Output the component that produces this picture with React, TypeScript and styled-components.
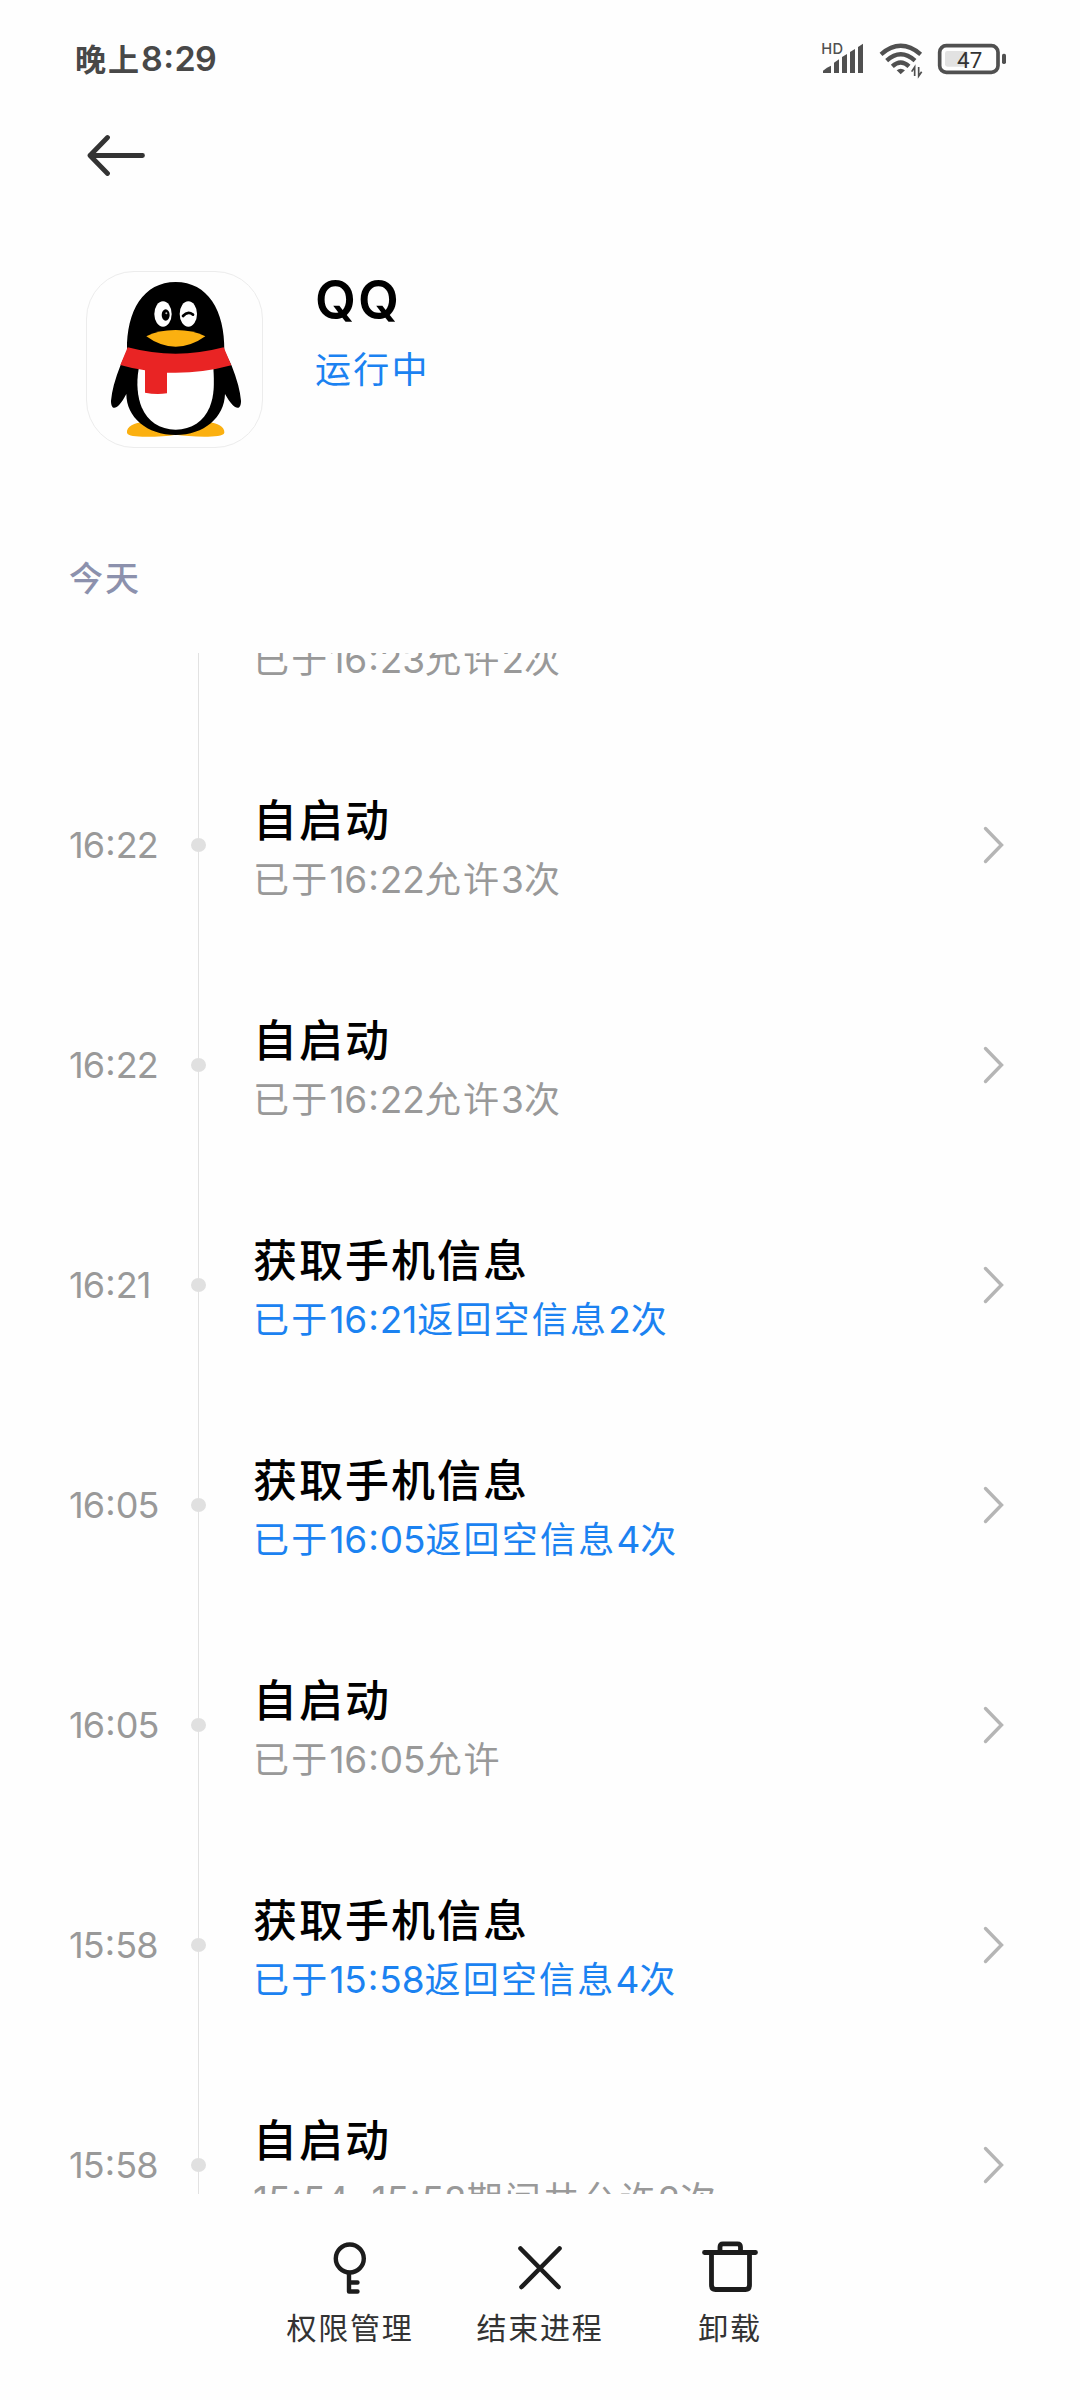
import styled, { createGlobalStyle } from 'styled-components';

interface Activity {
  time: string,
  title: string,
  detail: string,
  highlight?: boolean,
}

const activities: Activity[] = [
  { time: '16:23', title: '自启动', detail: '已于16:23允许2次' },
  { time: '16:22', title: '自启动', detail: '已于16:22允许3次' },
  { time: '16:22', title: '自启动', detail: '已于16:22允许3次' },
  { time: '16:21', title: '获取手机信息', detail: '已于16:21返回空信息2次', highlight: true },
  { time: '16:05', title: '获取手机信息', detail: '已于16:05返回空信息4次', highlight: true },
  { time: '16:05', title: '自启动', detail: '已于16:05允许' },
  { time: '15:58', title: '获取手机信息', detail: '已于15:58返回空信息4次', highlight: true },
  { time: '15:58', title: '自启动', detail: '15:54–15:58期间共允许2次' },
];

// digits are set in a different face than the Chinese text, colons sit a bit higher
function Mixed({ text }: { text: string }) {
  return (
    <>
      {text.split(/(\d+|:|–)/).filter(Boolean).map((part, i) => {
        if (part === ':') return <Colon key={i}>:</Colon>;
        if (part === '–') return <Dash key={i}>–</Dash>;
        return /\d/.test(part) ? <Digits key={i}>{part}</Digits> : part;
      })}
    </>
  );
}

function SignalIcon() {
  return (
    <svg width="46" height="40" viewBox="60 60 138 120" fill="#505050">
      <text x="67" y="102" fontFamily="Inter" fontSize="44" fontWeight="500" letterSpacing="1">HD</text>
      <path d="M72 159V152Q84 141 96 137V159Z" />
      <path d="M105 159V128L120 118V159Z" />
      <path d="M129 159V111L144 102V159Z" />
      <path d="M153 159V96L168 87V159Z" />
      <path d="M177 159V81L192 71V159Z" />
    </svg>
  );
}

function WifiIcon() {
  return (
    <svg width="44" height="40" viewBox="238 60 132 120" fill="none" stroke="#505050" strokeWidth="13">
      <path d="M244 103Q303 52 363 103" />
      <path d="M261 122Q303 84 346 122" />
      <path d="M278 139Q303 116 328 139" />
      <path d="M291 151Q303 141 316 151L303 163Z" fill="#505050" stroke="none" />
      <path d="M345 168V141L336 155M357 141V168L366 155" strokeWidth="5" />
    </svg>
  );
}

function BatteryIcon() {
  return (
    <svg width="70" height="40" viewBox="411 60 210 120">
      <rect x="419" y="77" width="175" height="80" rx="20" fill="none" stroke="#505050" strokeWidth="11" />
      <rect x="435" y="93" width="67" height="47" rx="7" fill="#e2e2e2" />
      <rect x="606" y="101" width="12" height="31" rx="5" fill="#505050" />
      <text x="509" y="143" textAnchor="middle" fontFamily="Roboto" fontSize="67" fontWeight="400" fill="#333">47</text>
    </svg>
  );
}

function BackIcon() {
  return (
    <svg width="60" height="42" viewBox="0 0 60 42" fill="none" stroke="#333" strokeWidth="4.8" strokeLinecap="round" strokeLinejoin="round">
      <path d="M21.5 3.5L4 21.5L21.5 39.5M4 21.5H56.5" />
    </svg>
  );
}

function ChevronIcon() {
  return (
    <svg width="22" height="40" viewBox="0 0 22 40" fill="none" stroke="#b5b5b5" strokeWidth="3.4" strokeLinecap="round">
      <path d="M2.5 3.5L18.5 20L2.5 36.5" />
    </svg>
  );
}

function Penguin() {
  return (
    <svg width="176" height="176" viewBox="48 64 528 528">
      <path d="M168 546C166 528 190 516 220 514H410C440 516 462 530 460 546C458 556 430 558 400 558Q350 557 314 552Q280 558 225 558C195 558 170 556 168 546Z" fill="#fbb010" />
      <path d="M168 300C166 180 218 94 314 94S462 180 460 300L482 345Q506 405 510 450C510 482 490 480 462 430C460 500 400 553 314 553S166 500 166 430C140 480 120 482 120 450Q124 405 148 345Z" fill="#000" />
      <path d="M203 355C195 400 200 440 212 470C230 512 266 537 314 537S398 512 416 470C430 435 430 400 427 350Z" fill="#fff" />
      <path d="M170 290Q314 328 458 290L481 344Q385 370 288 366V428Q255 433 222 426V359Q185 354 148 343Z" fill="#e92424" />
      <ellipse cx="276" cy="190" rx="26" ry="38" fill="#fff" />
      <ellipse cx="352" cy="190" rx="26" ry="38" fill="#fff" />
      <ellipse cx="284" cy="193" rx="12" ry="17" fill="#000" />
      <circle cx="286" cy="188" r="3" fill="#bbb" />
      <path d="M336 196Q350 180 366 192" fill="none" stroke="#000" strokeWidth="8" strokeLinecap="round" />
      <path d="M226 257Q262 238 314 238T403 257Q360 288 314 288T226 257Z" fill="#fbb010" />
    </svg>
  );
}

function KeyIcon() {
  return (
    <svg width="60" height="60" viewBox="0 0 60 60" fill="none" stroke="#1c1c1c" strokeWidth="4.4" strokeLinecap="round" strokeLinejoin="round">
      <circle cx="29.8" cy="21.5" r="14" />
      <path d="M29 36V54.5H37.5M29 45.5H37.5" />
    </svg>
  );
}

function CloseIcon() {
  return (
    <svg width="60" height="60" viewBox="0 0 60 60" fill="none" stroke="#1c1c1c" strokeWidth="4.6" strokeLinecap="round">
      <path d="M10.5 11.5L48.5 50M49.5 11.5L11.5 50" />
    </svg>
  );
}

function TrashIcon() {
  return (
    <svg width="60" height="60" viewBox="0 0 60 60" fill="none" stroke="#1c1c1c" strokeWidth="4.8" strokeLinecap="round" strokeLinejoin="round">
      <path d="M4.5 15.5H55.5M20 15V10Q20 6.800 23 6.800H37.5Q40.5 6.800 40.5 10V15M11.5 16V48Q11.5 52.5 15.5 52.5H45.5Q49.5 52.5 49.5 48V16" />
    </svg>
  );
}

export default function App() {
  return (
    <Screen>
      <GlobalStyle />
      <StatusBar>
        <Clock><Mixed text="晚上8:29" /></Clock>
        <StatusIcons>
          <SignalIcon />
          <WifiIcon />
          <BatteryIcon />
        </StatusIcons>
      </StatusBar>
      <Toolbar>
        <BackIcon />
      </Toolbar>
      <AppHeader>
        <AppIcon><Penguin /></AppIcon>
        <AppInfo>
          <AppName>QQ</AppName>
          <AppStatus>运行中</AppStatus>
        </AppInfo>
      </AppHeader>
      <Day>今天</Day>
      <Timeline>
        <Rows>
          {activities.map((item, i) => (
            <Row key={i}>
              <Time><Mixed text={item.time} /></Time>
              <Rail><Line /><Dot /><Line /></Rail>
              <Content>
                <Title>{item.title}</Title>
                <Detail $highlight={item.highlight}><Mixed text={item.detail} /></Detail>
              </Content>
              <ChevronIcon />
            </Row>
          ))}
        </Rows>
      </Timeline>
      <BottomBar>
        <Action><KeyIcon />权限管理</Action>
        <Action><CloseIcon />结束进程</Action>
        <Action><TrashIcon />卸载</Action>
      </BottomBar>
    </Screen>
  );
}

const GlobalStyle = createGlobalStyle`
  body {
    margin: 0;
    background: #fefefe;
  }

  svg {
    display: block;
    flex-shrink: 0;
  }
`;

const Screen = styled.div`
  display: flex;
  flex-direction: column;
  width: 1080px;
  height: 2400px;
  overflow: hidden;
  background: #fefefe;
  font-family: "Noto Sans CJK SC", sans-serif;
`;

const Digits = styled.span`
  font-family: Inter, sans-serif;
  line-height: 1;
`;

const Colon = styled(Digits)`
  margin: 0 1px;
  vertical-align: 0.09em;
`;

const Dash = styled(Digits)`
  margin: 0 2px;
`;

const StatusBar = styled.div`
  display: flex;
  align-items: center;
  justify-content: space-between;
  height: 120px;
  padding: 0 73px 0 75px;
  box-sizing: border-box;
`;

const Clock = styled.div`
  margin-bottom: 4px;
  font-size: 31px;
  font-weight: 700;
  line-height: 48px;
  letter-spacing: 2px;
  color: #484848;

  ${Digits} {
    font-size: 34px;
    font-weight: 600;
    letter-spacing: -0.6px;
  }
`;

const StatusIcons = styled.div`
  display: flex;
  gap: 14px;
`;

const Toolbar = styled.div`
  display: flex;
  align-items: center;
  height: 70px;
  padding-left: 86px;
`;

const AppHeader = styled.div`
  display: flex;
  gap: 53px;
  height: 178px;
  padding: 80px 86px 0;
`;

const AppIcon = styled.div`
  box-sizing: border-box;
  width: 177px;
  height: 177px;
  margin-top: 1px;
  border: 1px solid #ececec;
  border-radius: 48px;
  overflow: hidden;
`;

const AppInfo = styled.div`
  display: flex;
  flex-direction: column;
  margin-left: -1px;
`;

const AppName = styled.div`
  font-family: Inter, sans-serif;
  font-size: 53px;
  font-weight: 600;
  line-height: 60px;
  letter-spacing: 2px;
  color: #000;
`;

const AppStatus = styled.div`
  margin-top: 12px;
  font-size: 36px;
  line-height: 50px;
  letter-spacing: 2.3px;
  color: #1b82f1;
`;

const Day = styled.div`
  margin-top: 102px;
  padding-left: 69px;
  font-size: 34px;
  font-weight: 500;
  line-height: 54px;
  letter-spacing: 2px;
  color: #8c91ad;
`;

const Timeline = styled.div`
  height: 1541px;
  margin-top: 49px;
  overflow: hidden;
`;

const Rows = styled.div`
  margin-top: -138px;
`;

const Row = styled.div`
  display: flex;
  align-items: center;
  height: 220px;
  padding: 0 75px 0 69px;
`;

const Time = styled.div`
  width: 122px;
  margin-bottom: 6px;
  font-size: 36px;
  line-height: 50px;
  letter-spacing: -0.9px;
  color: #999;
`;

const Rail = styled.div`
  display: flex;
  flex-direction: column;
  align-items: center;
  align-self: stretch;
  width: 15px;
`;

const Line = styled.div`
  flex: 1;
  width: 1px;
  background: #e2e2e2;
`;

const Dot = styled.div`
  width: 15px;
  height: 14px;
  border-radius: 50%;
  background: #e0e0e0;
`;

const Content = styled.div`
  flex: 1;
  margin-left: 47px;
  padding-top: 2px;
`;

const Title = styled.div`
  font-size: 44px;
  font-weight: 500;
  line-height: 62px;
  letter-spacing: 2px;
  color: #000;
`;

const Detail = styled.div<{ $highlight?: boolean }>`
  font-size: 36px;
  line-height: 56px;
  letter-spacing: 2.2px;
  color: ${props => props.$highlight ? '#1b82f1' : '#999'};

  ${Digits} {
    font-size: 37px;
    letter-spacing: -0.1px;
  }
`;

const BottomBar = styled.div`
  display: flex;
  justify-content: center;
  padding-top: 43px;
`;

const Action = styled.div`
  display: flex;
  flex-direction: column;
  align-items: center;
  gap: 7px;
  width: 190px;
  font-size: 30px;
  line-height: 44px;
  letter-spacing: 1.8px;
  color: #333;
`;
